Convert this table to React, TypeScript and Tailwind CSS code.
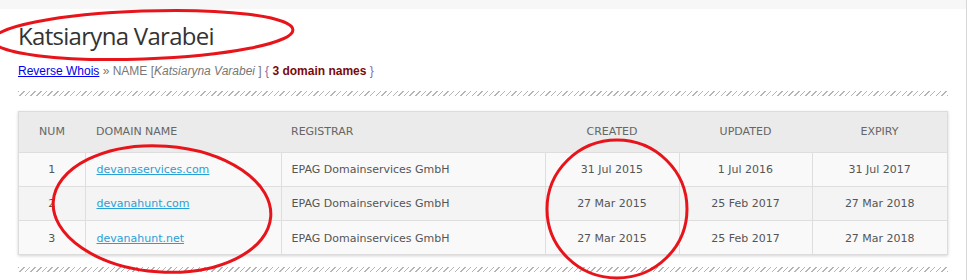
const rows = [
  { num: 1, domain: 'devanaservices.com', registrar: 'EPAG Domainservices GmbH', created: '31 Jul 2015', updated: '1 Jul 2016', expiry: '31 Jul 2017' },
  { num: 2, domain: 'devanahunt.com', registrar: 'EPAG Domainservices GmbH', created: '27 Mar 2015', updated: '25 Feb 2017', expiry: '27 Mar 2018' },
  { num: 3, domain: 'devanahunt.net', registrar: 'EPAG Domainservices GmbH', created: '27 Mar 2015', updated: '25 Feb 2017', expiry: '27 Mar 2018' },
];

function Hatch() {
  return (
    <div className="h-[5px] w-[930px] bg-[repeating-linear-gradient(135deg,#b5b5b5_0px,#b5b5b5_1px,transparent_1px,transparent_4px)]" />
  );
}

export default function App() {
  return (
    <div className="relative w-[969px] h-[280px] bg-white overflow-hidden">
      <div className="w-[967px] h-full border-r border-[#d8d8d8]">
        <div className="h-[9px] bg-[#f7f7f7]" />
        <div className="pl-[18px]">
          <h1 className="pt-[10px] h-[55px] text-[24px] leading-[34px] text-[#333] font-['Open_Sans',sans-serif] tracking-[-0.7px]">
            Katsiaryna Varabei
          </h1>
          <div className="text-[12px] leading-[14px] text-[#777] font-['Liberation_Sans',Arial,sans-serif]">
            <a href="#" className="text-[#0000ee] underline">Reverse Whois</a>
            <span> » NAME [<i>Katsiaryna Varabei</i> ] </span>
            <span className="text-[#8a6a9a]"> {'{'} </span>
            <b className="text-[#7a0a0a]">3 domain names</b>
            <span className="text-[#8a6a9a]"> {'}'}</span>
          </div>
          <div className="mt-[13px]">
            <Hatch />
          </div>
          <div className="mt-[15px] w-[930px] shadow-[0_1px_3px_rgba(0,0,0,0.18)] border border-[#dcdcdc]">
            <table className="w-full border-collapse table-fixed text-[11px] text-[#555] font-['DejaVu_Sans',Verdana,sans-serif]">
              <colgroup>
                <col className="w-[66px]" />
                <col className="w-[196px]" />
                <col className="w-[264px]" />
                <col className="w-[134px]" />
                <col className="w-[133px]" />
                <col />
              </colgroup>
              <thead>
                <tr className="h-[40px] bg-[#ebebeb] text-[#666]">
                  <th className="font-normal text-center">NUM</th>
                  <th className="font-normal text-left pl-[11px]">DOMAIN NAME</th>
                  <th className="font-normal text-left pl-[10px]">REGISTRAR</th>
                  <th className="font-normal text-center">CREATED</th>
                  <th className="font-normal text-center">UPDATED</th>
                  <th className="font-normal text-center">EXPIRY</th>
                </tr>
              </thead>
              <tbody>
                {rows.map((r, i) => (
                  <tr key={r.num} className={`h-[34px] ${i === 1 ? 'bg-[#f4f4f4]' : 'bg-[#f9f9f9]'}`}>
                    <td className="pt-[3px] text-center border-t border-[#dedede]">{r.num}</td>
                    <td className="pt-[3px] pl-[11px] border-t border-l border-[#dedede]">
                      <a href="#" className="text-[#2a9fd6] underline">{r.domain}</a>
                    </td>
                    <td className="pt-[3px] pl-[10px] border-t border-l border-[#dedede]">{r.registrar}</td>
                    <td className="pt-[3px] text-center border-t border-l border-[#dedede]">{r.created}</td>
                    <td className="pt-[3px] text-center border-t border-l border-[#dedede]">{r.updated}</td>
                    <td className="pt-[3px] text-center border-t border-l border-[#dedede]">{r.expiry}</td>
                  </tr>
                ))}
              </tbody>
            </table>
          </div>
          <div className="mt-[12px]">
            <Hatch />
          </div>
        </div>
      </div>
      {/* red annotation ellipses */}
      <svg className="absolute left-0 top-0 pointer-events-none" width="969" height="280">
        <ellipse cx="143" cy="35" rx="150" ry="24" transform="rotate(-2 143 35)" fill="none" stroke="#e8141c" strokeWidth="3" />
        <ellipse cx="162" cy="209" rx="109" ry="63" transform="rotate(4 162 209)" fill="none" stroke="#e8141c" strokeWidth="3" />
        <ellipse cx="617" cy="209" rx="70" ry="69" fill="none" stroke="#e8141c" strokeWidth="3" />
      </svg>
    </div>
  );
}
